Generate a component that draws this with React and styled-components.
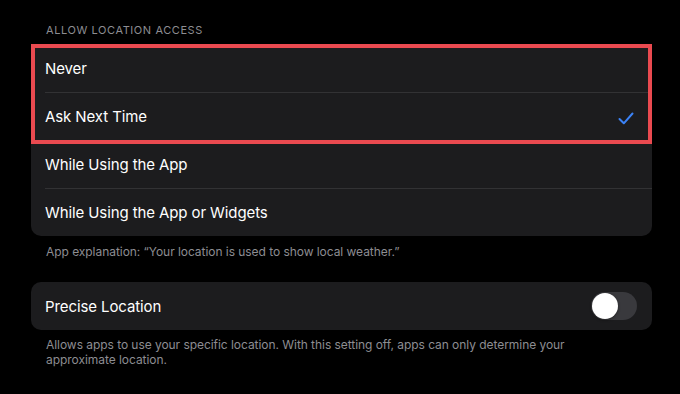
import styled, { createGlobalStyle } from "styled-components";

const GlobalStyle = createGlobalStyle`
  html, body {
    margin: 0;
    padding: 0;
    background: #000;
  }
  body {
    font-family: Inter, "Noto Sans", "Liberation Sans", sans-serif;
    -webkit-font-smoothing: antialiased;
  }
`;

const Page = styled.div`
  width: 680px;
  height: 394px;
  box-sizing: border-box;
  padding: 23px 28px 0 31px;
  background: #000;
  overflow: hidden;
`;

const SectionHeader = styled.div`
  padding-left: 15px;
  font-size: 11px;
  line-height: 14px;
  letter-spacing: 0.58px;
  color: #8d8d92;
  text-transform: uppercase;
  margin-bottom: 7px;
`;

const CardWrap = styled.div`
  position: relative;
`;

const Card = styled.div`
  background: #1c1c1e;
  border-radius: 10px;
  overflow: hidden;
`;

const Row = styled.div`
  height: 48px;
  margin-left: 14px;
  padding-right: ${(p) => p.$pr || 18}px;
  display: flex;
  align-items: center;
  justify-content: space-between;
  border-top: ${(p) => (p.$first ? "none" : "1px solid #323234")};
  box-sizing: border-box;
`;

const Label = styled.span`
  font-size: 15px;
  font-weight: 400;
  color: #fff;
  letter-spacing: -0.1px;
`;

const Highlight = styled.div`
  position: absolute;
  top: 0;
  left: 0;
  width: 621px;
  height: 100px;
  border: 4.5px solid #ea4a50;
  box-sizing: border-box;
  pointer-events: none;
`;

const Footer = styled.div`
  padding: 0 15px;
  margin-top: ${(p) => p.$mt || 8}px;
  margin-bottom: ${(p) => p.$mb || 0}px;
  font-size: 12px;
  line-height: 15px;
  color: #8d8d92;
  letter-spacing: -0.05px;
`;

const Track = styled.div`
  width: 46px;
  height: 28px;
  border-radius: 14px;
  background: #39393d;
  position: relative;
`;

const Knob = styled.div`
  position: absolute;
  top: 1px;
  left: 1px;
  width: 26px;
  height: 26px;
  border-radius: 50%;
  background: #fff;
  box-shadow: 0 1px 3px rgba(0, 0, 0, 0.4);
`;

const Check = () => (
  <svg width="16" height="13" viewBox="0 0 16 13" style={{ marginTop: 3 }}>
    <path
      d="M1.5 7 L5.8 11.3 L14.5 1.5"
      fill="none"
      stroke="#3b82f6"
      strokeWidth="2"
      strokeLinecap="round"
      strokeLinejoin="round"
    />
  </svg>
);

const options = [
  "Never",
  "Ask Next Time",
  "While Using the App",
  "While Using the App or Widgets",
];

const App = () => {
  const selected = "Ask Next Time";
  return (
    <Page>
      <GlobalStyle />
      <SectionHeader>Allow Location Access</SectionHeader>
      <CardWrap>
        <Card>
          {options.map((o, i) => (
            <Row key={o} $first={i === 0}>
              <Label>{o}</Label>
              {o === selected && <Check />}
            </Row>
          ))}
        </Card>
        <Highlight />
      </CardWrap>
      <Footer $mt={8} $mb={23}>
        App explanation: “Your location is used to show local weather.”
      </Footer>
      <Card>
        <Row $first $pr={15}>
          <Label>Precise Location</Label>
          <Track>
            <Knob />
          </Track>
        </Row>
      </Card>
      <Footer $mt={7}>
        Allows apps to use your specific location. With this setting off, apps can only determine your
        approximate location.
      </Footer>
    </Page>
  );
};

export default App;
